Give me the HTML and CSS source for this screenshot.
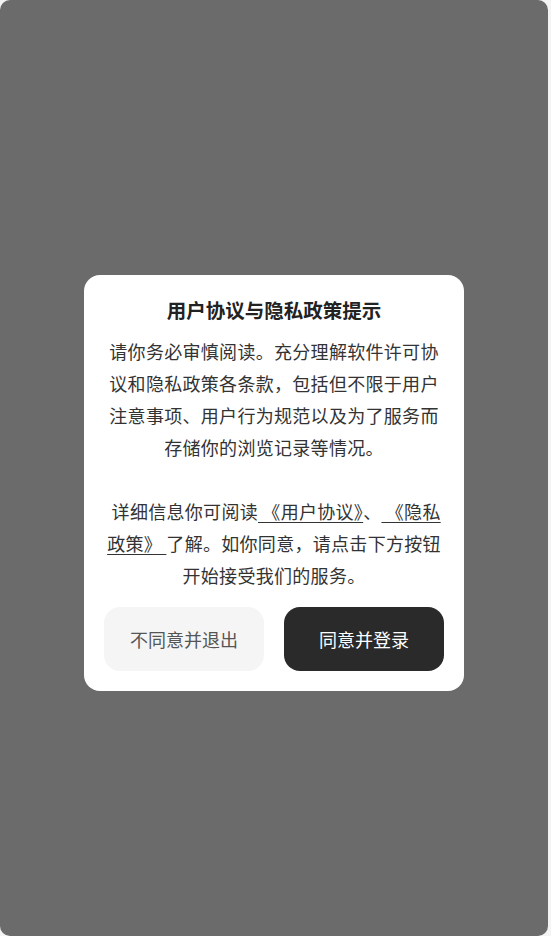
FILE: index.html
```html
<!DOCTYPE html>
<html lang="zh-CN">
<head>
<meta charset="utf-8">
<title>用户协议与隐私政策提示</title>
<link rel="stylesheet" href="styles.css">
</head>
<body>
<div class="screen">
  <div class="overlay">
    <div class="dialog">
      <h2 class="title">用户协议与隐私政策提示</h2>
      <p class="content">请你务必审慎阅读。充分理解软件许可协议和隐私政策各条款，包括但不限于用户注意事项、用户行为规范以及为了服务而存储你的浏览记录等情况。<br><br>&nbsp;详细信息你可阅读<a class="link" href="#"> 《用户协议》</a>、<a class="link" href="#"> 《隐私政策》 </a>了解。如你同意，请点击下方按钮开始接受我们的服务。</p>
      <div class="actions">
        <button class="btn btn-secondary">不同意并退出</button>
        <button class="btn btn-primary">同意并登录</button>
      </div>
    </div>
  </div>
</div>
</body>
</html>
```

FILE: styles.css
```css
html, body {
  margin: 0;
  padding: 0;
  background: #f4f4f4;
}
body {
  font-family: "Noto Sans CJK SC", "Noto Sans", sans-serif;
}
.screen {
  width: 551px;
  height: 936px;
  overflow: hidden;
}
.overlay {
  width: 548px;
  height: 936px;
  background: #6b6b6b;
  border-radius: 10px;
  display: flex;
  align-items: center;
  justify-content: center;
  padding-top: 30px;
  box-sizing: border-box;
}
.dialog {
  width: 380px;
  box-sizing: border-box;
  background: #ffffff;
  border-radius: 16px;
  padding: 20px;
}
.title {
  margin: 0;
  text-align: center;
  font-size: 19.5px;
  font-weight: 700;
  color: #222222;
  line-height: 30px;
}
.content {
  margin: 10px 0 16px;
  text-align: center;
  font-size: 18px;
  letter-spacing: 0.3px;
  line-height: 32px;
  color: #333333;
}
.link {
  color: #333333;
  text-decoration: underline;
  text-underline-offset: 3px;
  text-decoration-thickness: 1px;
}
.actions {
  display: flex;
  gap: 20px;
}
.btn {
  flex: 1;
  height: 64px;
  border: none;
  border-radius: 16px;
  font-family: "Noto Sans CJK SC", "Noto Sans", sans-serif;
  font-size: 18px;
  cursor: pointer;
}
.btn-secondary {
  background: #f5f5f5;
  color: #555555;
}
.btn-primary {
  background: #2a2a2a;
  color: #ffffff;
}
```
